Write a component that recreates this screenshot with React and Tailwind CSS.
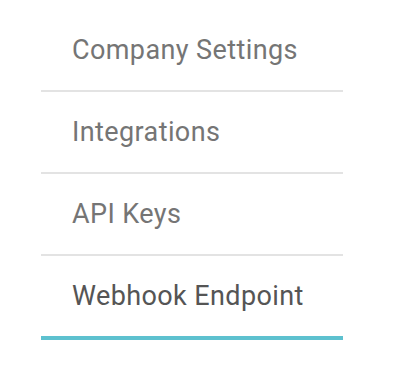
export default function App() {
  const items = [
    { label: "Company Settings", active: false },
    { label: "Integrations", active: false },
    { label: "API Keys", active: false },
    { label: "Webhook Endpoint", active: true },
  ];
  return (
    <div className="w-[412px] h-[368px] bg-white pt-[10px] pl-[41px]" style={{ fontFamily: "Roboto, 'Noto Sans', sans-serif" }}>
      <ul className="w-[302px]">
        {items.map((it) =>
          it.active ? (
            <li key={it.label} className="h-[84px] flex items-center pl-[31px] border-b-4 border-[#5dc1cf] text-[27px] tracking-[0.4px] text-[#555555]">
              {it.label}
            </li>
          ) : (
            <li key={it.label} className="h-[82px] flex items-center pl-[31px] border-b-2 border-[#e3e3e3] text-[27px] tracking-[0.4px] text-[#757575]">
              {it.label}
            </li>
          )
        )}
      </ul>
    </div>
  );
}
